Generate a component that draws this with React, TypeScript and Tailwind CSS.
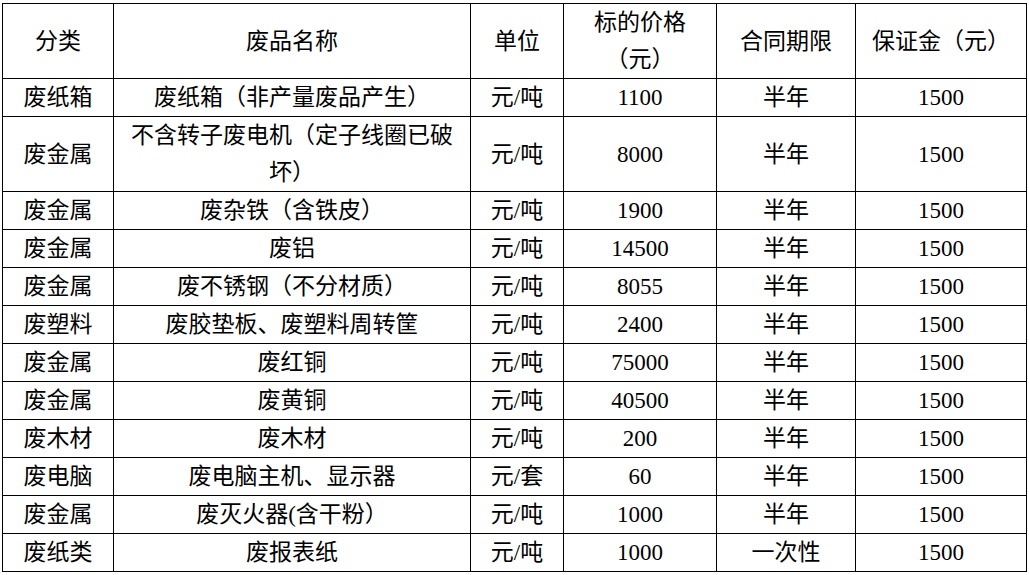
const rows: [string, string, string, string, string, string][] = [
  ["废纸箱", "废纸箱（非产量废品产生）", "元/吨", "1100", "半年", "1500"],
  ["废金属", "不含转子废电机（定子线圈已破坏）", "元/吨", "8000", "半年", "1500"],
  ["废金属", "废杂铁（含铁皮）", "元/吨", "1900", "半年", "1500"],
  ["废金属", "废铝", "元/吨", "14500", "半年", "1500"],
  ["废金属", "废不锈钢（不分材质）", "元/吨", "8055", "半年", "1500"],
  ["废塑料", "废胶垫板、废塑料周转筐", "元/吨", "2400", "半年", "1500"],
  ["废金属", "废红铜", "元/吨", "75000", "半年", "1500"],
  ["废金属", "废黄铜", "元/吨", "40500", "半年", "1500"],
  ["废木材", "废木材", "元/吨", "200", "半年", "1500"],
  ["废电脑", "废电脑主机、显示器", "元/套", "60", "半年", "1500"],
  ["废金属", "废灭火器(含干粉）", "元/吨", "1000", "半年", "1500"],
  ["废纸类", "废报表纸", "元/吨", "1000", "一次性", "1500"],
];

const headers = ["分类", "废品名称", "单位", "标的价格（元）", "合同期限", "保证金（元）"];

export default function App() {
  return (
    <div className="min-h-[575px] w-[1029px] bg-white pl-[2px] pt-[3px] text-black">
      <table
        className="w-[1024px] table-fixed border-collapse text-center text-[23px] leading-[37px]"
        style={{ fontFamily: '"Liberation Serif", "Noto Sans CJK SC", serif' }}
      >
        <colgroup>
          <col className="w-[111px]" />
          <col className="w-[357px]" />
          <col className="w-[93px]" />
          <col className="w-[153px]" />
          <col className="w-[139px]" />
          <col className="w-[171px]" />
        </colgroup>
        <thead>
          <tr className="h-[75px]">
            {headers.map((h) => (
              <th key={h} className="border border-black px-2 font-normal">
                {h}
              </th>
            ))}
          </tr>
        </thead>
        <tbody>
          {rows.map((r, i) => (
            <tr key={i} className={i === 1 ? "h-[75px]" : "h-[38px]"}>
              {r.map((c, j) => (
                <td key={j} className="border border-black px-2 py-0">
                  {c}
                </td>
              ))}
            </tr>
          ))}
        </tbody>
      </table>
    </div>
  );
}
